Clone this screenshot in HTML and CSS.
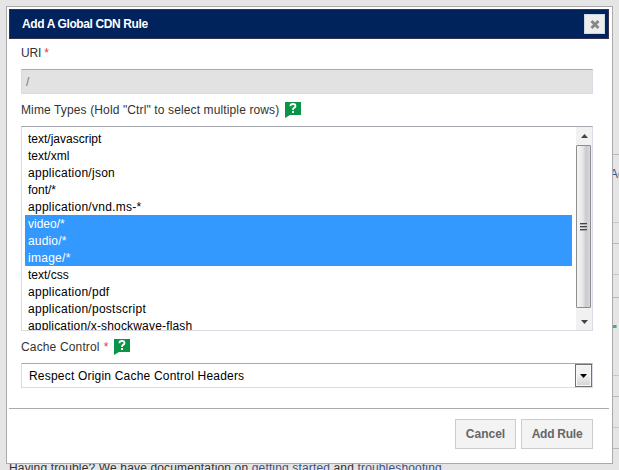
FILE: index.html
```
<!DOCTYPE html>
<html lang="en">
<head>
<meta charset="utf-8">
<title>Add A Global CDN Rule</title>
<link rel="stylesheet" href="styles.css">
</head>
<body>
<div class="page">
  <div class="table">
    <div class="row row-top"></div>
    <div class="row row-link"><a>Actions</a></div>
    <div class="row row-s"></div>
    <div class="row row-m"></div>
    <div class="row row-s row-23"></div>
    <div class="row row-status"><i></i></div>
    <div class="row row-s"></div>
    <div class="row row-m"></div>
    <div class="row row-s"></div>
  </div>
  <p class="help-line">Having trouble? We have documentation on <a>getting started</a> and <a>troubleshooting</a></p>
</div>
<div class="dialog" role="dialog">
  <header class="titlebar">
    <h1>Add A Global CDN Rule</h1>
    <button class="close" aria-label="Close"><svg width="10" height="9" viewBox="0 0 10 9"><path d="M1.5 1L8.5 8M8.5 1L1.5 8"/></svg></button>
  </header>
  <main class="form">
    <div class="label label-uri"><span>URI</span> <em>*</em></div>
    <div class="input">/</div>
    <div class="label label-mime"><span>Mime Types (Hold "Ctrl" to select multiple rows)</span>
      <svg class="help" width="16" height="16" viewBox="0 0 16 16"><path class="bubble" d="M0 0H16V13H5L0 16Z"/><path class="mark" d="M5.5 4.3V3.4Q5.5 2 8 2T10.5 4Q10.5 5.3 9 5.9Q8 6.3 8 8"/><path class="dot" d="M7 9H9V11H7Z"/></svg>
    </div>
    <div class="listbox">
      <ul>
        <li>text/javascript</li>
        <li>text/xml</li>
        <li class="wide">application/json</li>
        <li>font/*</li>
        <li class="wide">application/vnd.ms-*</li>
        <li class="selected">video/*</li>
        <li class="selected mid">audio/*</li>
        <li class="selected wide">image/*</li>
        <li>text/css</li>
        <li class="wide">application/pdf</li>
        <li class="wide">application/postscript</li>
        <li class="mid">application/x-shockwave-flash</li>
      </ul>
      <div class="scrollbar">
        <div class="arrow"><svg width="7" height="4" viewBox="0 0 7 4"><path d="M0 4L3.5 0L7 4Z"/></svg></div>
        <div class="thumb"><i></i><i></i><i></i></div>
        <div class="arrow"><svg width="7" height="4" viewBox="0 0 7 4"><path d="M0 0L3.5 4L7 0Z"/></svg></div>
      </div>
    </div>
    <div class="label label-cache"><span>Cache Control</span> <em>*</em>
      <svg class="help" width="16" height="16" viewBox="0 0 16 16"><path class="bubble" d="M0 0H16V13H5L0 16Z"/><path class="mark" d="M5.5 4.3V3.4Q5.5 2 8 2T10.5 4Q10.5 5.3 9 5.9Q8 6.3 8 8"/><path class="dot" d="M7 9H9V11H7Z"/></svg>
    </div>
    <div class="select"><span>Respect Origin Cache Control Headers</span><b class="drop"><svg width="7" height="4" viewBox="0 0 7 4"><path d="M0 0H7L3.5 4Z"/></svg></b></div>
  </main>
  <footer class="actions">
    <button class="btn cancel">Cancel</button>
    <button class="btn add">Add Rule</button>
  </footer>
</div>
</body>
</html>
```
FILE: styles.css
```
* { box-sizing: border-box; }
body, h1, ul, p { margin: 0; padding: 0; }
body {
  width: 619px;
  height: 470px;
  overflow: hidden;
  background: #e5e5e5;
  font: 12px/17px "Liberation Sans", Arial, sans-serif;
  color: #333;
}
a { color: #3b5286; }
.page { height: 470px; overflow: hidden; }
.table { height: 460px; padding-left: 610px; }
.row { height: 21px; border-bottom: 1px solid #b8b8b8; }
.row-top { height: 155px; }
.row-link { height: 68px; padding: 11px 0 0 0; overflow: hidden; white-space: nowrap; border-color: #c8c8c8; }
.row-m { height: 31px; border-color: #c8c8c8; }
.row-23 { height: 23px; }
.row-status { height: 78px; padding-top: 27px; border-color: #c8c8c8; }
.row-status i { display: block; width: 7px; height: 3px; background: #49ac78; border-right: 1px solid #8cbfd9; }
.help-line { padding-left: 9px; white-space: nowrap; letter-spacing: .15px; }

.dialog {
  position: absolute;
  left: 6px;
  top: 6px;
  width: 607px;
  height: 458px;
  padding: 2px 3px 0 2px;
  background: #fff;
  border: 1px solid #aaa;
}
.titlebar {
  display: flex;
  align-items: center;
  justify-content: space-between;
  height: 30px;
  padding: 0 3px 0 12px;
  background: #00235c;
  border: 1px solid #343153;
}
h1 { font-size: 12px; line-height: 17px; color: #fff; letter-spacing: -.38px; }
.close {
  display: flex;
  align-items: center;
  justify-content: center;
  width: 21px;
  height: 20px;
  padding: 0;
  background: #eee;
  border: 1px solid #ccd8de;
}
.close svg { stroke: #888; stroke-width: 2.9; }
.form { height: 369px; padding: 0 16px 0 12px; }
.label { display: flex; align-items: center; white-space: nowrap; }
.label em { margin-left: 4px; font-style: normal; color: #dc3b3b; }
.label-uri { height: 30px; padding-bottom: 1px; letter-spacing: -.15px; }
.label-uri em { margin-left: 3px; }
.label-mime { height: 32px; letter-spacing: .125px; }
.label-cache { height: 32px; letter-spacing: .15px; }
.help { margin-left: 6px; }
.bubble { fill: #0a9447; }
.mark { fill: none; stroke: #fff; stroke-width: 1.8; }
.dot { fill: #fff; }
.input {
  height: 25px;
  padding: 4px 4px;
  color: #777;
  background: #e2e2e2;
  border: 1px solid #dadae4;
  border-top-color: #aaa;
}
.listbox {
  display: flex;
  height: 205px;
  overflow: hidden;
  border: 1px solid #dadae4;
  border-top-color: #a6a6ae;
  color: #000;
}
.listbox ul { flex: 1; padding: 3px 4px 0 3px; list-style: none; }
.listbox li { height: 17px; padding-left: 3px; line-height: 19px; }
.listbox .selected { color: #fff; background: #3399ff; }
.wide { letter-spacing: .27px; }
.mid { letter-spacing: .17px; }
.scrollbar { display: flex; flex-direction: column; width: 16px; background: #f1f1f1; }
.arrow { display: flex; align-items: center; justify-content: center; height: 18px; }
.arrow svg { fill: #444; }
.scrollbar .arrow:last-child { height: 22px; padding-top: 6px; }
.thumb {
  display: flex;
  flex: 1;
  flex-direction: column;
  align-items: center;
  justify-content: center;
  gap: 1px;
  width: 15px;
  background: linear-gradient(90deg, #f6f6f6, #e6e6e8 45%, #c9c9cf 70%, #d9d9dd);
  border: 1px solid #8d8d8d;
  border-radius: 1px;
}
.thumb i { width: 7px; height: 2px; border-top: 1px solid #444; border-bottom: 1px solid #aaa; }
.select {
  display: flex;
  align-items: center;
  justify-content: space-between;
  height: 25px;
  padding-left: 7px;
  color: #000;
  letter-spacing: .2px;
  border: 1px solid #dadae4;
  border-top-color: #aaa;
}
.select span { padding-top: 1px; }
.drop {
  display: flex;
  align-items: center;
  justify-content: center;
  width: 17px;
  height: 23px;
  background: linear-gradient(#f2f2f2 45%, #d2d2d2);
  border: 1px solid #707070;
  box-shadow: inset 0 0 0 1px #f8f8f8;
}
.actions {
  display: flex;
  justify-content: flex-end;
  gap: 5px;
  padding: 10px 16px 0 0;
  border-top: 1px solid #aaa;
}
.btn {
  height: 30px;
  padding: 0;
  font: bold 12px/17px "Liberation Sans", Arial, sans-serif;
  color: #666;
  background: #f3f3f3;
  border: 1px solid #ccc;
}
.cancel { width: 61px; }
.add { width: 72px; letter-spacing: -.25px; }
```
